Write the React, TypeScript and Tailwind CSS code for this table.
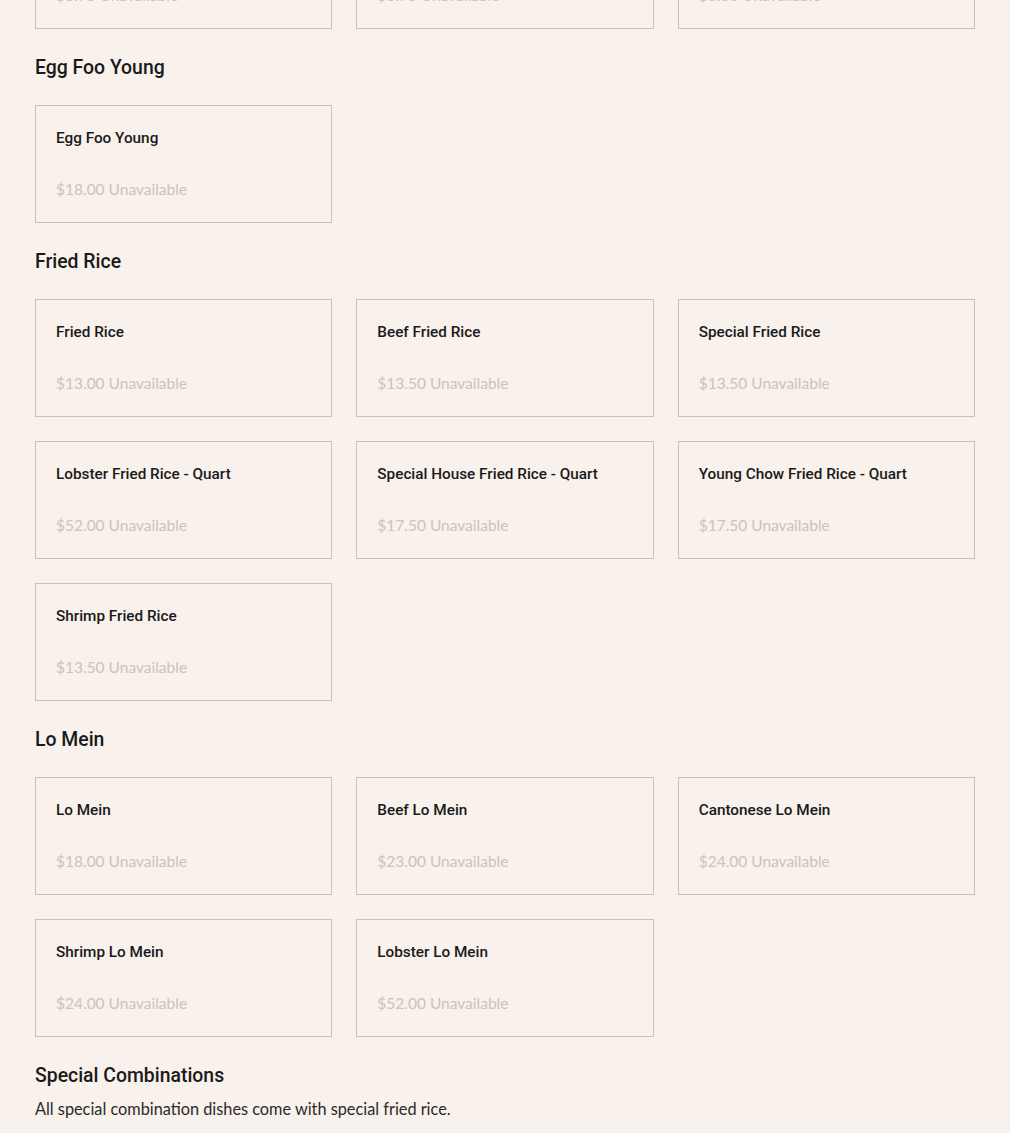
const sections = [
  {
    title: "",
    note: "",
    items: [
      { name: "Egg Roll", price: "$6.75" },
      { name: "Spring Roll", price: "$6.75" },
      { name: "Crab Rangoon", price: "$8.00" },
    ],
  },
  {
    title: "Egg Foo Young",
    note: "",
    items: [{ name: "Egg Foo Young", price: "$18.00" }],
  },
  {
    title: "Fried Rice",
    note: "",
    items: [
      { name: "Fried Rice", price: "$13.00" },
      { name: "Beef Fried Rice", price: "$13.50" },
      { name: "Special Fried Rice", price: "$13.50" },
      { name: "Lobster Fried Rice - Quart", price: "$52.00" },
      { name: "Special House Fried Rice - Quart", price: "$17.50" },
      { name: "Young Chow Fried Rice - Quart", price: "$17.50" },
      { name: "Shrimp Fried Rice", price: "$13.50" },
    ],
  },
  {
    title: "Lo Mein",
    note: "",
    items: [
      { name: "Lo Mein", price: "$18.00" },
      { name: "Beef Lo Mein", price: "$23.00" },
      { name: "Cantonese Lo Mein", price: "$24.00" },
      { name: "Shrimp Lo Mein", price: "$24.00" },
      { name: "Lobster Lo Mein", price: "$52.00" },
    ],
  },
  {
    title: "Special Combinations",
    note: "All special combination dishes come with special fried rice.",
    items: [],
  },
];

function MenuCard({ name, price }: { name: string; price: string }) {
  return (
    <div className="h-[118px] border border-[#c9c0ba] px-5 pt-5">
      <div className="text-[15.3px] leading-6 font-medium text-[#1a1a1a] font-['Roboto','Inter',sans-serif]">
        {name}
      </div>
      <div className="mt-[27px] text-[15.5px] leading-6 text-[#cbc3be] font-['Lato','Noto_Sans',sans-serif]">
        {price} Unavailable
      </div>
    </div>
  );
}

export default function App() {
  return (
    <div className="min-h-[1133px] bg-[#f8f1ec] overflow-hidden">
      <div className="mx-[35px] -mt-[89px] pb-10">
        {sections.map((s, i) => (
          <section key={i}>
            {s.title && (
              <h2 className="mt-[25px] text-[19.4px] leading-7 font-medium text-[#1a1a1a] font-['Roboto','Inter',sans-serif]">
                {s.title}
              </h2>
            )}
            {s.note && (
              <p className="mt-[7px] text-[16.3px] leading-6 text-[#2a2a2a] font-['Lato','Noto_Sans',sans-serif]">
                {s.note}
              </p>
            )}
            {s.items.length > 0 && (
              <div className={`grid grid-cols-3 gap-6 ${s.title ? "mt-[23px]" : ""}`}>
                {s.items.map((it) => (
                  <MenuCard key={it.name} name={it.name} price={it.price} />
                ))}
              </div>
            )}
          </section>
        ))}
      </div>
    </div>
  );
}
